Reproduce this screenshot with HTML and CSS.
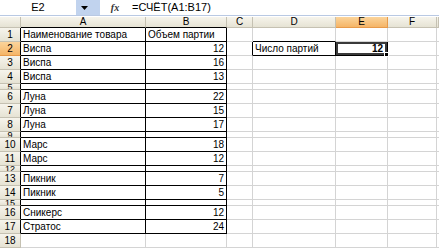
FILE: index.html
```html
<!doctype html>
<html>
  <head>
    <title>Книга1</title>
    <link rel="stylesheet" href="styles.css">
  </head>
  <body>
    <div class='formula-bar'>
      <div class='name-box'>E2</div>
      <div class='name-arrow'>
        <svg width="7" height="4" viewBox="0 0 7 4"><path d="M0 0h7L3.5 4z" fill="#000"/></svg>
      </div>
      <div class='fx'>fx</div>
      <div class='formula'>=СЧЁТ(A1:B17)</div>
    </div>

    <div class='sheet'>
      <div class='corner'></div>
      <div class='ch edge'>A</div>
      <div class='ch edge'>B</div>
      <div class='ch'>C</div>
      <div class='ch'>D</div>
      <div class='ch sel'>E</div>
      <div class='ch'>F</div>
      <div class='ch'></div>
      <!--1-->
      <div class='rh edge'>1</div>
      <div class='c b'>Наименование товара</div>
      <div class='c b'>Объем партии</div>
      <div class='c'></div>
      <div class='c under'></div>
      <div class='c under'></div>
      <div class='c'></div>
      <div class='c'></div>
      <!--2-->
      <div class='rh edge sel'>2</div>
      <div class='c b'>Виспа</div>
      <div class='c b num'>12</div>
      <div class='c before'></div>
      <div class='c b'>Число партий</div>
      <div class='c b num active'><strong>12</strong></div>
      <div class='c'></div>
      <div class='c'></div>
      <!--3-->
      <div class='rh edge'>3</div>
      <div class='c b'>Виспа</div>
      <div class='c b num'>16</div>
      <div class='c'></div>
      <div class='c'></div>
      <div class='c'></div>
      <div class='c'></div>
      <div class='c'></div>
      <!--4-->
      <div class='rh edge'>4</div>
      <div class='c b'>Виспа</div>
      <div class='c b num'>13</div>
      <div class='c'></div>
      <div class='c'></div>
      <div class='c'></div>
      <div class='c'></div>
      <div class='c'></div>
      <!--5-->
      <div class='rh edge short'>5</div>
      <div class='c b'></div>
      <div class='c b'></div>
      <div class='c'></div>
      <div class='c'></div>
      <div class='c'></div>
      <div class='c'></div>
      <div class='c'></div>
      <!--6-->
      <div class='rh edge'>6</div>
      <div class='c b'>Луна</div>
      <div class='c b num'>22</div>
      <div class='c'></div>
      <div class='c'></div>
      <div class='c'></div>
      <div class='c'></div>
      <div class='c'></div>
      <!--7-->
      <div class='rh edge'>7</div>
      <div class='c b'>Луна</div>
      <div class='c b num'>15</div>
      <div class='c'></div>
      <div class='c'></div>
      <div class='c'></div>
      <div class='c'></div>
      <div class='c'></div>
      <!--8-->
      <div class='rh edge'>8</div>
      <div class='c b'>Луна</div>
      <div class='c b num'>17</div>
      <div class='c'></div>
      <div class='c'></div>
      <div class='c'></div>
      <div class='c'></div>
      <div class='c'></div>
      <!--9-->
      <div class='rh edge short'>9</div>
      <div class='c b'></div>
      <div class='c b'></div>
      <div class='c'></div>
      <div class='c'></div>
      <div class='c'></div>
      <div class='c'></div>
      <div class='c'></div>
      <!--10-->
      <div class='rh edge'>10</div>
      <div class='c b'>Марс</div>
      <div class='c b num'>18</div>
      <div class='c'></div>
      <div class='c'></div>
      <div class='c'></div>
      <div class='c'></div>
      <div class='c'></div>
      <!--11-->
      <div class='rh edge'>11</div>
      <div class='c b'>Марс</div>
      <div class='c b num'>12</div>
      <div class='c'></div>
      <div class='c'></div>
      <div class='c'></div>
      <div class='c'></div>
      <div class='c'></div>
      <!--12-->
      <div class='rh edge short'>12</div>
      <div class='c b'></div>
      <div class='c b'></div>
      <div class='c'></div>
      <div class='c'></div>
      <div class='c'></div>
      <div class='c'></div>
      <div class='c'></div>
      <!--13-->
      <div class='rh edge'>13</div>
      <div class='c b'>Пикник</div>
      <div class='c b num'>7</div>
      <div class='c'></div>
      <div class='c'></div>
      <div class='c'></div>
      <div class='c'></div>
      <div class='c'></div>
      <!--14-->
      <div class='rh edge'>14</div>
      <div class='c b'>Пикник</div>
      <div class='c b num'>5</div>
      <div class='c'></div>
      <div class='c'></div>
      <div class='c'></div>
      <div class='c'></div>
      <div class='c'></div>
      <!--15-->
      <div class='rh edge short'>15</div>
      <div class='c b'></div>
      <div class='c b'></div>
      <div class='c'></div>
      <div class='c'></div>
      <div class='c'></div>
      <div class='c'></div>
      <div class='c'></div>
      <!--16-->
      <div class='rh edge'>16</div>
      <div class='c b'>Сникерс</div>
      <div class='c b num'>12</div>
      <div class='c'></div>
      <div class='c'></div>
      <div class='c'></div>
      <div class='c'></div>
      <div class='c'></div>
      <!--17-->
      <div class='rh edge'>17</div>
      <div class='c b'>Стратос</div>
      <div class='c b num'>24</div>
      <div class='c'></div>
      <div class='c'></div>
      <div class='c'></div>
      <div class='c'></div>
      <div class='c'></div>
      <!--18-->
      <div class='rh'>18</div>
      <div class='c'></div>
      <div class='c'></div>
      <div class='c'></div>
      <div class='c'></div>
      <div class='c'></div>
      <div class='c'></div>
      <div class='c'></div>
    </div>
  </body>
</html>
```

FILE: styles.css
```css
body {
  margin: 0;
  background: #fff;
  color: #000;
  font-family: "Liberation Sans", Arial, sans-serif;
  font-size: 10px;
}

/* formula bar */
.formula-bar {
  display: flex;
  height: 15px;
  border-bottom: 1px solid #b9c9e3;
  margin-bottom: 1px;
  background: #fff;
}
.name-box {
  width: 76px;
  text-align: center;
  line-height: 15px;
  font-size: 11px;
}
.name-arrow {
  width: 24px;
  background: #c1d3ee;
  display: flex;
  align-items: center;
  justify-content: center;
  padding-right: 8px;
  box-sizing: border-box;
}
.fx {
  width: 30px;
  text-align: center;
  line-height: 15px;
  font-family: "Liberation Serif", serif;
  font-style: italic;
  font-weight: bold;
  font-size: 10px;
  color: #333;
}
.formula {
  flex: 1;
  line-height: 15px;
  font-size: 11px;
  padding-left: 2px;
}

/* grid */
.sheet {
  display: grid;
  grid-template-columns: 21px 125px 81px 26px 83px 52px 49px 2px;
  grid-template-rows: 11px 14px 14px 14px 14px 6px 14px 14px 14px 6px 14px 14px 6px 14px 14px 6px 14px 14px 14px;
}
.sheet > div {
  box-sizing: border-box;
  overflow: hidden;
  white-space: nowrap;
}

/* headers */
.corner,
.ch,
.rh {
  background: linear-gradient(#f6f4ec, #e6e3d4);
  border-right: 1px solid #c5c1b2;
  border-bottom: 1px solid #c5c1b2;
  display: flex;
  align-items: center;
  justify-content: center;
  line-height: 10px;
}
.rh.short {
  font-size: 9px;
}
.ch.sel,
.rh.sel {
  background: linear-gradient(#fbd49b, #f5b567);
  border-color: #e79a4a;
}
.ch.edge {
  border-bottom-color: #000;
}
.rh.edge {
  border-right-color: #000;
}

/* cells */
.c {
  border-right: 1px solid #d4d4d4;
  border-bottom: 1px solid #d4d4d4;
  padding: 0 2px;
  line-height: 13px;
}
.c.b {
  border-right-color: #000;
  border-bottom-color: #000;
}
.c.under {
  border-bottom-color: #000;
}
.c.under + .c.under {
  border-bottom-color: #d4d4d4;
}
.c.before {
  border-right-color: #000;
}
.num {
  text-align: right;
}
.sheet > .active {
  position: relative;
  overflow: visible;
  padding-right: 4px;
  box-shadow: inset 0 0 0 2px #3a3a3a;
}
.active::after {
  content: '';
  position: absolute;
  right: -2px;
  bottom: -2px;
  width: 3px;
  height: 3px;
  background: #000;
  border: 1px solid #fff;
}
```
